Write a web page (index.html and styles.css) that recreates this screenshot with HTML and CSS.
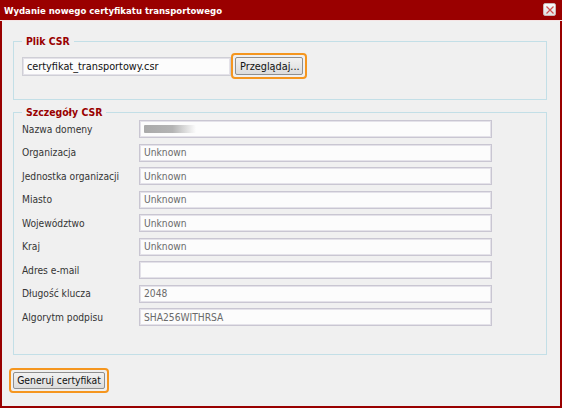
FILE: index.html
```html
<!DOCTYPE html>
<html lang="pl">
<head>
<meta charset="utf-8">
<link rel="stylesheet" href="styles.css">
</head>
<body>
<div class="dialog">
  <div class="titlebar">
    <span class="title">Wydanie nowego certyfikatu transportowego</span>
    <span class="close">
      <svg width="8" height="8" viewBox="0 0 8 8"><path d="M0.5 0.5 L7.5 7.5 M7.5 0.5 L0.5 7.5" stroke="#d0504f" stroke-width="1.2" fill="none"/></svg>
    </span>
  </div>
  <div class="content">
    <fieldset class="group group-file">
      <legend>Plik CSR</legend>
      <div class="file-row">
        <span class="field field-file">certyfikat_transportowy.csr</span>
        <span class="focus"><button class="btn">Przeglądaj...</button></span>
      </div>
    </fieldset>
    <fieldset class="group group-details">
      <legend>Szczegóły CSR</legend>
      <div class="form">
        <span class="label">Nazwa domeny</span><span class="field"><span class="blur"></span></span>
        <span class="label">Organizacja</span><span class="field">Unknown</span>
        <span class="label">Jednostka organizacji</span><span class="field">Unknown</span>
        <span class="label">Miasto</span><span class="field">Unknown</span>
        <span class="label">Województwo</span><span class="field">Unknown</span>
        <span class="label">Kraj</span><span class="field">Unknown</span>
        <span class="label">Adres e-mail</span><span class="field"></span>
        <span class="label">Długość klucza</span><span class="field">2048</span>
        <span class="label">Algorytm podpisu</span><span class="field">SHA256WITHRSA</span>
      </div>
    </fieldset>
    <div class="actions">
      <span class="focus"><button class="btn btn-generate">Generuj certyfikat</button></span>
    </div>
  </div>
</div>
</body>
</html>
```
FILE: styles.css
```css
* { box-sizing: border-box; }
html, body { margin: 0; padding: 0; }
body {
  width: 562px;
  height: 408px;
  overflow: hidden;
  font-family: "DejaVu Sans Condensed", "DejaVu Sans", sans-serif;
  font-stretch: condensed;
  font-size: 10.2px;
  background: #f0f0f0;
}
.dialog {
  width: 562px;
  height: 408px;
  border: 2px solid #990000;
  border-top: none;
  background: #f0f0f0;
  display: flex;
  flex-direction: column;
}
.titlebar {
  height: 21px;
  margin: 0 -2px;
  background: #9a0000;
  display: flex;
  align-items: center;
  justify-content: space-between;
  padding: 0 6px 0 4px;
  border-bottom: 1px solid #f4e4e4;
}
.title {
  color: #fff;
  font-weight: bold;
  font-size: 9.5px;
}
.close {
  width: 13px;
  height: 13px;
  margin-top: -1px;
  border: 1px solid #c9b4b4;
  border-radius: 2px;
  background: linear-gradient(#fafafa, #e2e2e2);
  display: flex;
  align-items: center;
  justify-content: center;
}
.content {
  padding: 0 13px 0 11px;
}
.group {
  margin: 0;
  border: 1px solid #c3dfe7;
  padding: 0 8px;
}
.group legend {
  color: #990000;
  font-weight: bold;
  font-size: 10.4px;
  padding: 0 4px;
  line-height: 13px;
}
.group-file {
  margin-top: 14px;
  padding-top: 5px;
  padding-bottom: 20px;
}
.file-row {
  display: flex;
  align-items: center;
}
.field {
  display: flex;
  align-items: center;
  height: 18px;
  background: #fcfcfc;
  border: 1px solid #c9c6d2;
  box-shadow: inset 0 0 0 1px #e4e2e9;
  padding: 0 4px;
  color: #6a6a6a;
  white-space: nowrap;
}
.field-file {
  width: 209px;
  height: 19px;
  color: #111;
  font-size: 10.8px;
  border-color: #cfcfd6;
}
.focus {
  display: inline-flex;
  padding: 2px;
  border: 2px solid #f5961f;
  border-radius: 4px;
}
.btn {
  font-family: inherit;
  font-stretch: condensed;
  font-size: 10.8px;
  color: #111;
  margin: 0;
  padding: 0 4px;
  height: 17px;
  border: 1px solid #8f8f8f;
  border-radius: 2px;
  background: linear-gradient(#f2f2f2, #dcdcdc);
  line-height: 15px;
  white-space: nowrap;
}
.group-file .btn { width: 68px; height: 18px; }
.group-details {
  margin-top: 6px;
  padding-top: 1px;
  padding-bottom: 28px;
}
.form {
  display: grid;
  grid-template-columns: 117px 353px;
  row-gap: 5.5px;
  align-items: center;
}
.label {
  color: #353535;
}
.blur {
  width: 52px;
  height: 8px;
  background: linear-gradient(90deg, #aaa 0%, #b4b4b4 55%, rgba(220,220,220,0) 100%);
  border-radius: 1px;
}
.actions {
  margin-top: 13px;
  margin-left: -4px;
}
.btn-generate { width: 92px; padding: 0 2px; font-size: 10.3px; }
```
